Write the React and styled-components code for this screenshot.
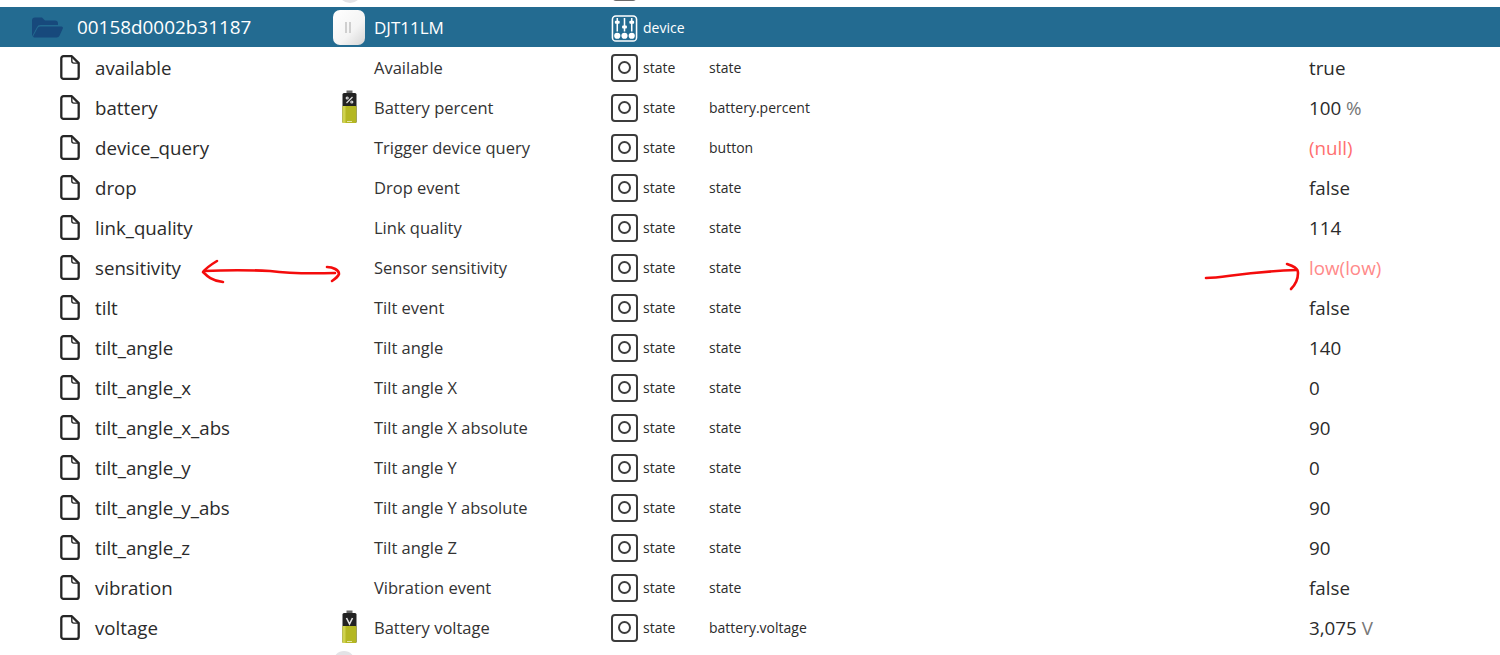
import React from 'react';
import styled, { createGlobalStyle } from 'styled-components';

const GlobalStyle = createGlobalStyle`
    html, body {
        margin: 0;
        background: #ffffff;
        overflow: hidden;
    }
`

const Page = styled.div`
    position: relative;
    width: 1500px;
    height: 655px;
    overflow: hidden;
    font-family: "Open Sans", "Noto Sans", sans-serif;
    color: #2b2b2b;
`

const Tree = styled.div`
    margin-top: -33px;
`

const Row = styled.div`
    display: grid;
    grid-template-columns: 333px 41px 237px 32px 66px 600px 1fr;
    align-items: center;
    height: 40px;
    background: ${p => (p.$selected ? '#236b91' : 'transparent')};
    color: ${p => (p.$selected ? '#ffffff' : 'inherit')};
`

const NameCell = styled.div`
    display: flex;
    align-items: center;
    gap: ${p => (p.$selected ? '14px' : '15.5px')};
    padding-left: ${p => (p.$selected ? '32px' : '59.5px')};
    font-size: ${p => (p.$selected ? '18.9px' : '18.7px')};
    white-space: nowrap;
`

const IconCell = styled.div`
    display: flex;
    align-items: center;
    height: 40px;
`

const TitleCell = styled.div`
    font-size: ${p => (p.$selected ? '17px' : '16.5px')};
    white-space: nowrap;
    color: ${p => (p.$selected ? '#ffffff' : '#333333')};
`

const TypeIconCell = styled.div`
    display: flex;
    align-items: center;
    justify-content: flex-start;
    margin-top: ${p => (p.$selected ? '3px' : '1px')};
`

const SmallCell = styled.div`
    font-size: 14px;
    white-space: nowrap;
`

const ValueCell = styled.div`
    font-size: 18.8px;
    white-space: nowrap;
    padding-top: 1px;
    color: ${p => p.$color || '#2b2b2b'};
`

const Unit = styled.span`
    color: #777777;
`

const StateBox = styled.span`
    display: inline-flex;
    align-items: center;
    justify-content: center;
    box-sizing: border-box;
    width: 27px;
    height: 28px;
    border: 2px solid #3c3c3c;
    border-radius: 4px;
    background: #fff;
`

const StateDot = styled.span`
    display: block;
    box-sizing: border-box;
    width: 13px;
    height: 13px;
    border: 2px solid #3c3c3c;
    border-radius: 50%;
`

const Sensor = styled.span`
    display: flex;
    align-items: center;
    justify-content: center;
    gap: 2px;
    width: 32px;
    height: 35px;
    margin-top: 1px;
    padding-right: 2px;
    box-sizing: border-box;
    border-radius: 7px;
    background: linear-gradient(135deg, #ffffff 0%, #f4f4f4 60%, #d5d5d5 100%);
`

const SensorBar = styled.span`
    display: block;
    width: 2px;
    height: 11px;
    background: #cfcfcf;
`

// icon of a row that the window cuts off, only its rounded edge shows
const PeekIcon = styled.span`
    display: block;
    width: ${p => p.$width}px;
    height: 32px;
    margin-left: ${p => p.$left}px;
    border-radius: ${p => p.$width / 2}px;
    background: #e3e3e6;
`

const BatteryWrap = styled.span`
    display: block;
    margin-left: 8px;
    line-height: 0;
`

const Scribble = styled.svg`
    position: absolute;
    left: 0;
    top: 0;
    pointer-events: none;
`

function FileIcon() {
    return (
        <svg width="20" height="25" viewBox="0 0 20 25" fill="none" stroke="#262626" strokeWidth="2.3" strokeLinejoin="round">
            <path d="M3.5 1.2h8.3l6.9 6.9v13.6a2.2 2.2 0 0 1-2.2 2.2H3.5a2.2 2.2 0 0 1-2.2-2.2V3.4a2.2 2.2 0 0 1 2.2-2.2z" />
            <path d="M11.8 1.5v4.6a2 2 0 0 0 2 2h4.8" strokeWidth="1.4" />
        </svg>
    );
}

function FolderIcon() {
    return (
        <svg width="31" height="21" viewBox="0 0 31 20" fill="#17497c">
            <path d="M0 3a3 3 0 0 1 3-3h7l3 3h10a3 3 0 0 1 3 3v1.5H8.5a4 4 0 0 0-3.7 2.4L0 19z" />
            <path d="M8 9h21.5a1.4 1.4 0 0 1 1.3 2l-3.3 7.2a3 3 0 0 1-2.7 1.8H2.2a1 1 0 0 1-.9-1.5L5.6 10.5A3 3 0 0 1 8 9z" />
        </svg>
    );
}

function DeviceIcon({ color }) {
    return (
        <svg width="27" height="27" viewBox="0 0 27 28" fill="none" stroke={color}>
            <rect x="1" y="1" width="25" height="26" rx="3.5" strokeWidth="1.6" />
            <g strokeWidth="1.6">
                <path d="M6 3v14M13.5 3v14M21 3v14" />
            </g>
            <g fill={color} stroke="none">
                <rect x="3.5" y="6" width="5" height="3" rx="1" />
                <rect x="11" y="11" width="5" height="3" rx="1" />
                <rect x="18.5" y="6" width="5" height="3" rx="1" />
                <circle cx="6" cy="21.5" r="3.2" />
                <circle cx="13.5" cy="21.5" r="3.2" />
                <circle cx="21" cy="21.5" r="3.2" />
            </g>
        </svg>
    );
}

function BatteryIcon({ mark }) {
    return (
        <svg width="17" height="34" viewBox="0 0 17 34">
            <rect x="5.5" y="0.5" width="6" height="3" fill="#666666" />
            <rect x="1.5" y="3" width="14" height="30" rx="1.5" fill="#222222" />
            <rect x="1.5" y="16" width="14" height="17" rx="1" fill="#b4b722" />
            <rect x="1.5" y="16" width="3" height="17" fill="#cfd24d" />
            <rect x="6" y="31" width="5" height="1" fill="#e4e5a8" />
            {mark === 'percent' ? (
                <g stroke="#dddddd" strokeWidth="1.2" fill="none">
                    <path d="M11.5 7l-6 6" />
                    <circle cx="6.2" cy="8" r="1" />
                    <circle cx="10.8" cy="12" r="1" />
                </g>
            ) : (
                <path d="M5.5 8l3 6 3-6" stroke="#e4e4e4" strokeWidth="1.6" fill="none" />
            )}
        </svg>
    );
}

const rows = [
    { name: 'available', title: 'Available', role: 'state', value: 'true' },
    { name: 'battery', title: 'Battery percent', role: 'battery.percent', value: '100', unit: '%', mark: 'percent' },
    { name: 'device_query', title: 'Trigger device query', role: 'button', value: '(null)', color: '#ff6f6f' },
    { name: 'drop', title: 'Drop event', role: 'state', value: 'false' },
    { name: 'link_quality', title: 'Link quality', role: 'state', value: '114' },
    { name: 'sensitivity', title: 'Sensor sensitivity', role: 'state', value: 'low(low)', color: '#ff8a8a' },
    { name: 'tilt', title: 'Tilt event', role: 'state', value: 'false' },
    { name: 'tilt_angle', title: 'Tilt angle', role: 'state', value: '140' },
    { name: 'tilt_angle_x', title: 'Tilt angle X', role: 'state', value: '0' },
    { name: 'tilt_angle_x_abs', title: 'Tilt angle X absolute', role: 'state', value: '90' },
    { name: 'tilt_angle_y', title: 'Tilt angle Y', role: 'state', value: '0' },
    { name: 'tilt_angle_y_abs', title: 'Tilt angle Y absolute', role: 'state', value: '90' },
    { name: 'tilt_angle_z', title: 'Tilt angle Z', role: 'state', value: '90' },
    { name: 'vibration', title: 'Vibration event', role: 'state', value: 'false' },
    { name: 'voltage', title: 'Battery voltage', role: 'battery.voltage', value: '3,075', unit: 'V', mark: 'voltage' },
];

function App() {
    return (
        <Page>
            <GlobalStyle />
            <Tree>
                {/* rows cut off by the top and bottom of the window */}
                <Row>
                    <span />
                    <IconCell><PeekIcon $width={24} $left={5} /></IconCell>
                    <span />
                    <TypeIconCell><DeviceIcon color="#3c3c3c" /></TypeIconCell>
                </Row>

                <Row $selected>
                    <NameCell $selected><FolderIcon />00158d0002b31187</NameCell>
                    <IconCell><Sensor><SensorBar /><SensorBar /></Sensor></IconCell>
                    <TitleCell $selected>DJT11LM</TitleCell>
                    <TypeIconCell $selected><DeviceIcon color="#ffffff" /></TypeIconCell>
                    <SmallCell>device</SmallCell>
                </Row>

                {rows.map(r => (
                    <Row key={r.name}>
                        <NameCell><FileIcon />{r.name}</NameCell>
                        <IconCell>{r.mark && <BatteryWrap><BatteryIcon mark={r.mark} /></BatteryWrap>}</IconCell>
                        <TitleCell>{r.title}</TitleCell>
                        <TypeIconCell><StateBox><StateDot /></StateBox></TypeIconCell>
                        <SmallCell>state</SmallCell>
                        <SmallCell>{r.role}</SmallCell>
                        <ValueCell $color={r.color}>
                            {r.value}{r.unit && <Unit> {r.unit}</Unit>}
                        </ValueCell>
                    </Row>
                ))}

                <Row>
                    <span />
                    <IconCell><PeekIcon $width={22} $left={0} /></IconCell>
                </Row>
            </Tree>

            {/* hand drawn red marks on top of the screenshot */}
            <Scribble width="1500" height="655" fill="none" stroke="#f40c0c" strokeWidth="2.6" strokeLinecap="round" strokeLinejoin="round">
                <path d="M217 261 C212 264 207 267 203 272 C207 276 212 281 223 282" />
                <path d="M204 271 C225 270 250 270 270 271 C285 273 300 274 335 273" />
                <path d="M327 267 C333 267 339 270 339 274 C338 277 335 279 332 281" />
                <path d="M1206 278 C1225 278 1240 272 1297 270" />
                <path d="M1287 264 C1293 266 1298 268 1298 273 C1298 279 1295 285 1291 289" />
            </Scribble>
        </Page>
    );
}

export default App;
